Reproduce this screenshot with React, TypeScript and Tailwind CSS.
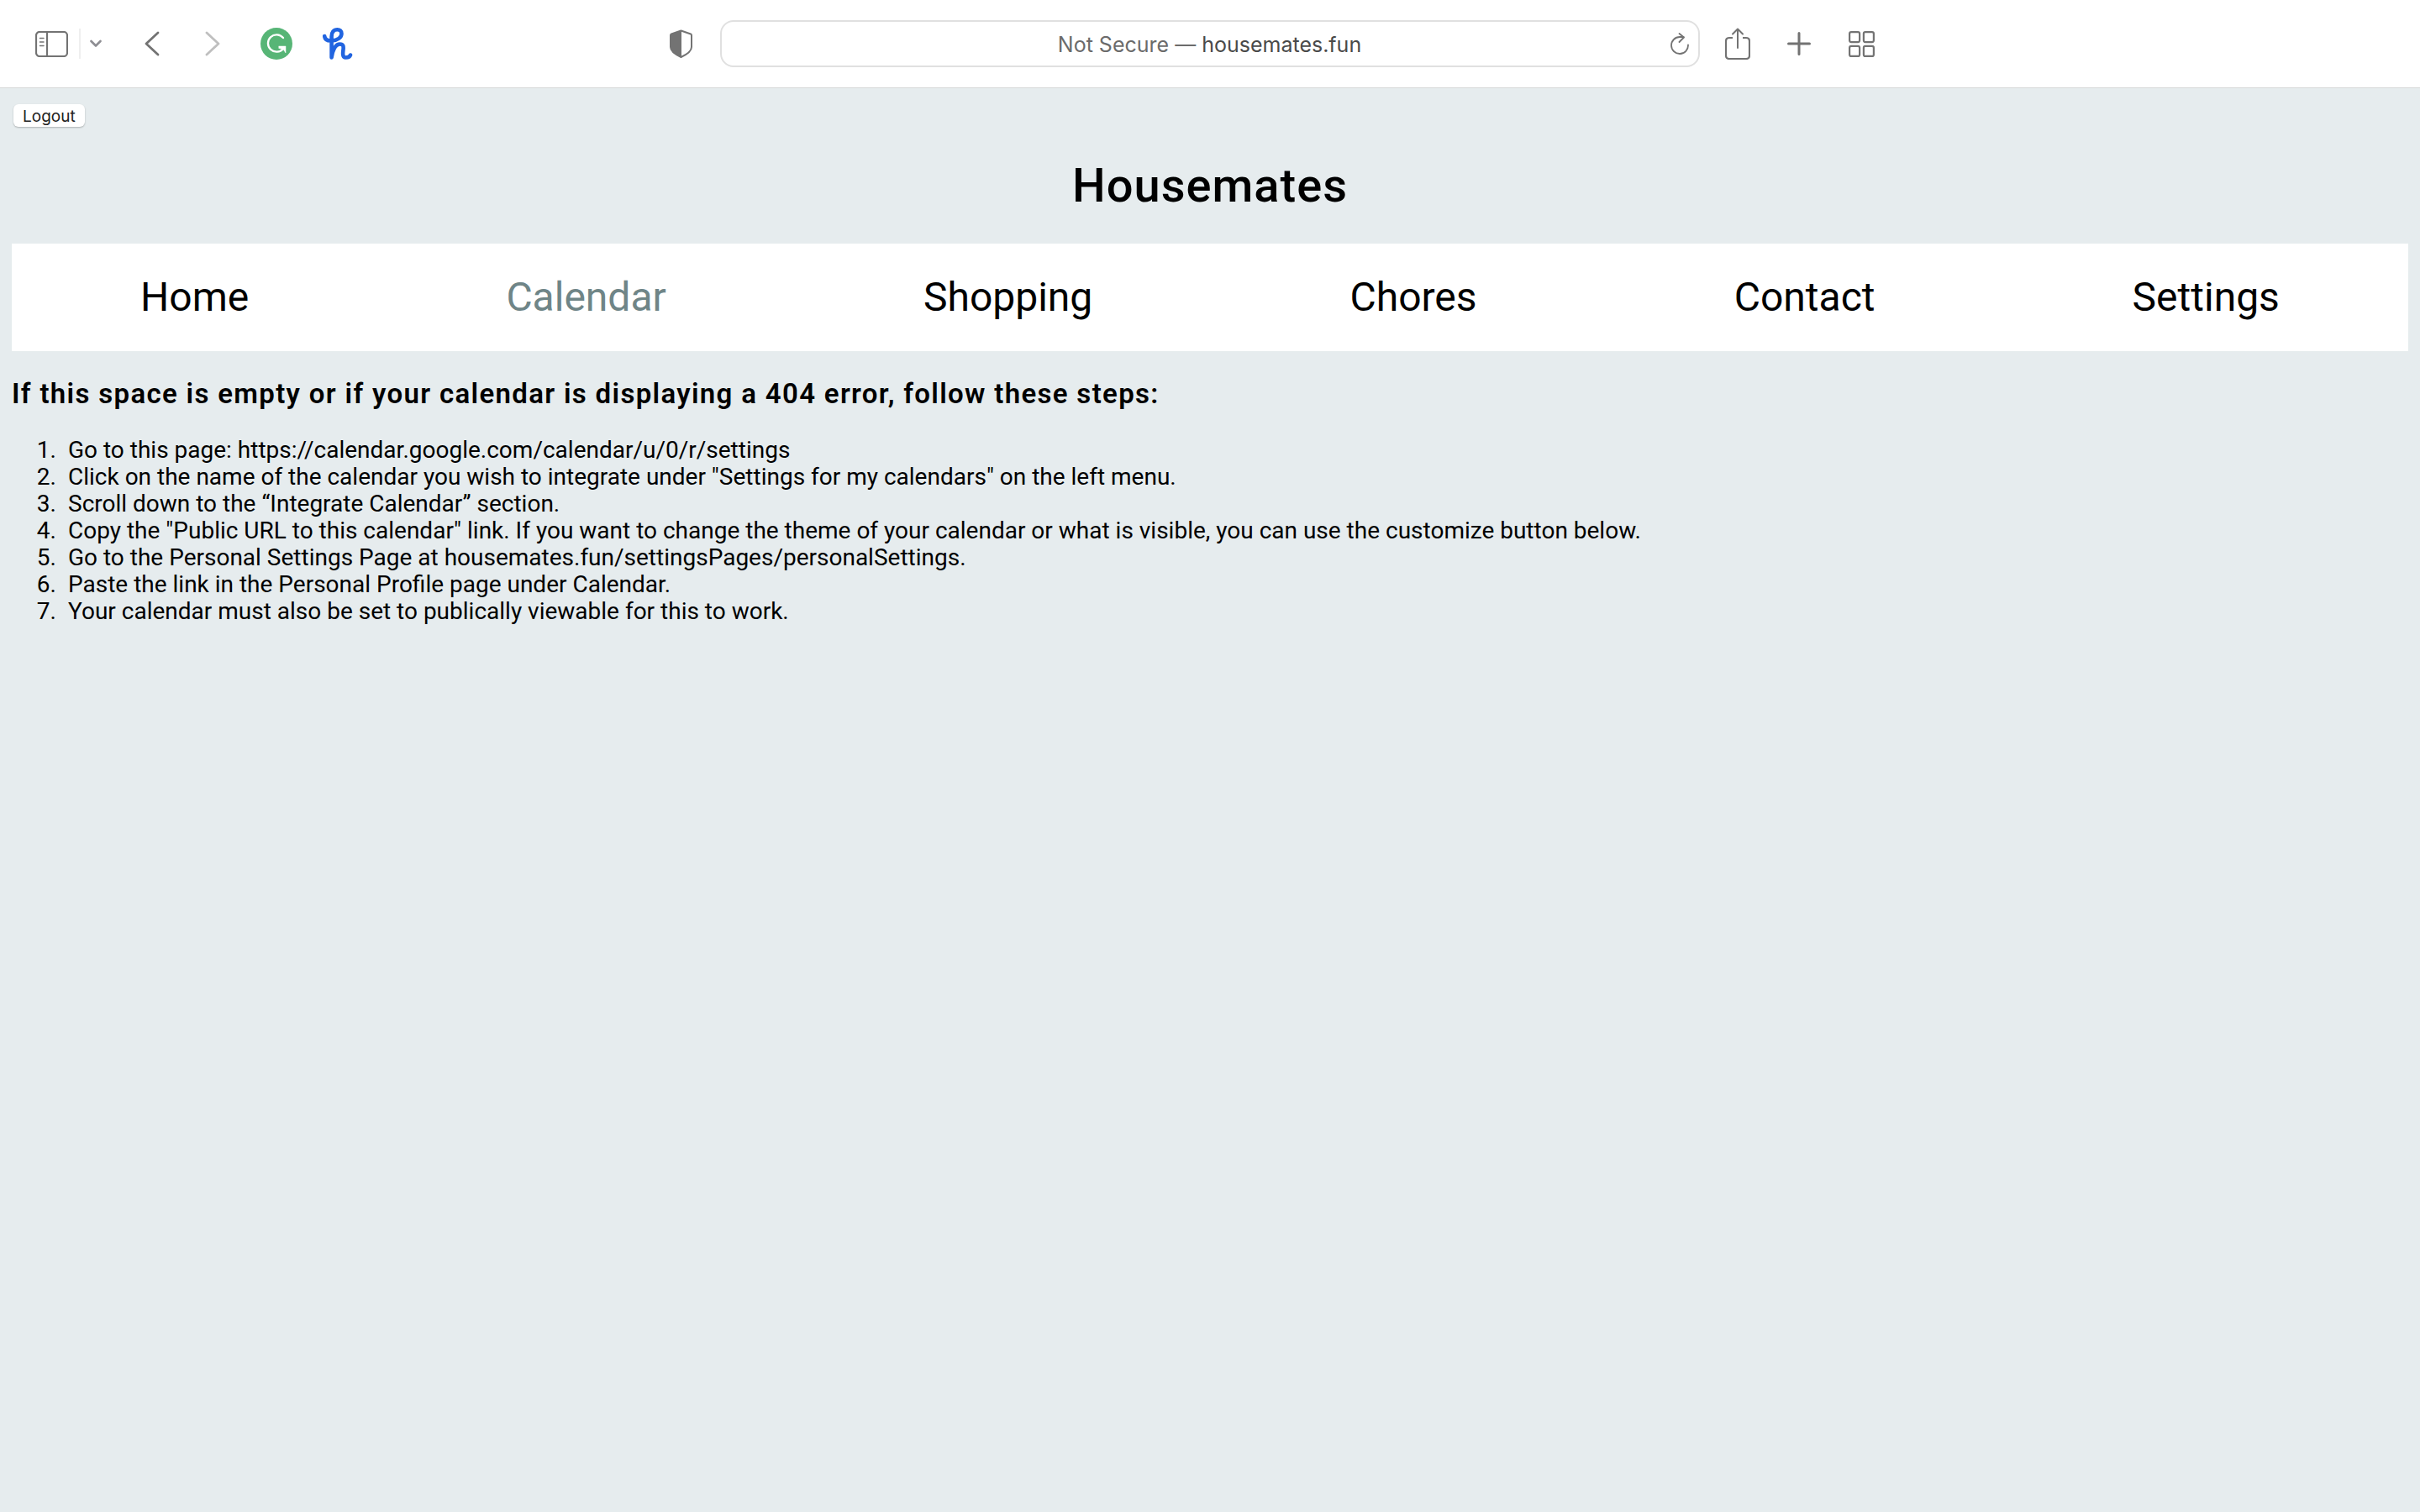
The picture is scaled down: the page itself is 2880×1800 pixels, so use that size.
import type { ReactNode } from "react";

type IconProps = { width: number; height: number; children: ReactNode };

function Icon({ width, height, children }: IconProps) {
  return (
    <svg
      width={width}
      height={height}
      viewBox={`0 0 ${width} ${height}`}
      fill="none"
      stroke="currentColor"
      strokeLinecap="round"
      strokeLinejoin="round"
      aria-hidden="true"
      className="block"
    >
      {children}
    </svg>
  );
}

function ToolButton({ label, muted, children }: { label: string; muted?: boolean; children: ReactNode }) {
  return (
    <button type="button" aria-label={label} className={muted ? "text-[#bfbfbf]" : "text-[#737373]"}>
      {children}
    </button>
  );
}

function Toolbar() {
  return (
    <header className="grid h-[105px] grid-cols-[857fr_1166fr_857fr] items-center border-b border-[#d6d8d8] bg-white">
      <div className="flex items-center justify-between pr-[33px] pl-[42px]">
        <div className="flex items-center">
          <ToolButton label="Show sidebar">
            <Icon width={39} height={31}>
              <rect x="1" y="1" width="37" height="29" rx="4" strokeWidth="2.200" />
              <path d="M14 1v29" strokeWidth="2.200" />
              <path d="M5.500 8.500h4.500M5.500 13h4.500M5.500 17.500h4.500" strokeWidth="1.500" />
            </Icon>
          </ToolButton>
          <span className="ml-[13px] h-9 w-0.5 bg-[#efefef]" />
          <div className="ml-[11px] flex">
            <ToolButton label="Tab groups">
              <Icon width={14} height={10}>
                <path d="M1.500 2l5.500 5.500L12.500 2" stroke="#8e8e93" strokeWidth="2.600" />
              </Icon>
            </ToolButton>
          </div>
          <div className="ml-[51px] flex">
            <ToolButton label="Back">
              <Icon width={18} height={30}>
                <path d="M16 2L2 15l14 13" strokeWidth="2.800" />
              </Icon>
            </ToolButton>
          </div>
          <div className="ml-[54px] flex">
            <ToolButton label="Forward" muted>
              <Icon width={18} height={30}>
                <path d="M2 2l14 13L2 28" strokeWidth="2.800" />
              </Icon>
            </ToolButton>
          </div>
          <div className="ml-[48px] flex">
            <ToolButton label="Grammarly">
              <Icon width={38} height={38}>
                <circle cx="19" cy="19" r="19" fill="#57b576" stroke="none" />
                <path d="M27 12A10.200 10.200 0 1 0 27 25" stroke="#fff" strokeWidth="2.300" />
                <path d="M22 22h8v8l-3-4.500-5-1z" fill="#fff" stroke="#fff" strokeWidth="0.500" />
              </Icon>
            </ToolButton>
          </div>
          <div className="ml-[36px] flex">
            <ToolButton label="Honey">
              <Icon width={36} height={38}>
                <path
                  d="M2.200 10C2.500 14 6 15.800 11 15.500C18 15 22.500 11.500 22.500 7C22.500 4 20.500 2.300 17.500 2.300C13 2.300 10.600 5.500 10.600 10.500V35.500C12 27 15 19.500 20.500 19.500C24.500 19.500 25 22 24.500 26C24 30 23.200 35.500 27.500 35.500C30.500 35.500 32.500 34 33 32.500"
                  stroke="#2164e0"
                  strokeWidth="4.600"
                />
              </Icon>
            </ToolButton>
          </div>
        </div>
        <ToolButton label="Privacy report">
          <Icon width={27} height={34}>
            <path
              d="M13.500 1.500L25 5.500Q26 6 26 7v14c0 5-5 8.500-12.500 12C6 29.500 1 26 1 21V7q0-1 1-1.500z"
              strokeWidth="2"
            />
            <path d="M14 1.500v31.500C6 29.500 1 26 1 21V7q0-1 1-1.500z" fill="currentColor" strokeWidth="0" />
          </Icon>
        </ToolButton>
      </div>

      <div className="flex h-14 items-center rounded-2xl border-2 border-[#e0e0e0] pr-[11px] pl-8 font-['Inter',sans-serif] text-[25px] leading-8">
        <p className="flex-1 pt-0.5 text-center text-[#6b6b6b]">
          Not Secure — <span className="text-[#4a4a4a]">housemates.fun</span>
        </p>
        <ToolButton label="Reload">
          <Icon width={22} height={26}>
            <path d="M21 14.500A10 10 0 1 1 11 5H15.500" strokeWidth="1.800" />
            <path d="M10.500 1l5.500 4.500L10.500 11" strokeWidth="1.800" />
          </Icon>
        </ToolButton>
      </div>

      <div className="flex items-center pl-[30px]">
        <ToolButton label="Share">
          <Icon width={30} height={38}>
            <path d="M9 12H5q-4 0-4 4v17q0 4 4 4h20q4 0 4-4V16q0-4-4-4h-4" strokeWidth="2.200" strokeLinecap="butt" />
            <path d="M15 24V2M9 7.500L15 1.500l6 6" strokeWidth="2" />
          </Icon>
        </ToolButton>
        <div className="ml-[44px] flex">
          <ToolButton label="New tab">
            <Icon width={28} height={28}>
              <path d="M14 1.500v25M1.500 14h25" strokeWidth="3" />
            </Icon>
          </ToolButton>
        </div>
        <div className="ml-[45px] flex">
          <ToolButton label="Tab overview">
            <Icon width={31} height={31}>
              <g strokeWidth="2.200">
                <rect x="1.100" y="1.100" width="12" height="12" rx="2" />
                <rect x="17.900" y="1.100" width="12" height="12" rx="2" />
                <rect x="1.100" y="17.900" width="12" height="12" rx="2" />
                <rect x="17.900" y="17.900" width="12" height="12" rx="2" />
              </g>
            </Icon>
          </ToolButton>
        </div>
      </div>
    </header>
  );
}

const pages = ["Home", "Calendar", "Shopping", "Chores", "Contact", "Settings"];

const steps = [
  "Go to this page: https://calendar.google.com/calendar/u/0/r/settings",
  'Click on the name of the calendar you wish to integrate under "Settings for my calendars" on the left menu.',
  "Scroll down to the “Integrate Calendar” section.",
  'Copy the "Public URL to this calendar" link. If you want to change the theme of your calendar or what is visible, you can use the customize button below.',
  "Go to the Personal Settings Page at housemates.fun/settingsPages/personalSettings.",
  "Paste the link in the Personal Profile page under Calendar.",
  "Your calendar must also be set to publically viewable for this to work.",
];

export default function App() {
  return (
    <div className="flex min-h-screen flex-col bg-[#e6ecee] font-['Roboto',sans-serif] text-black">
      <Toolbar />
      <main className="flex-1 px-3.5 pt-[19px]">
        <button
          type="button"
          className="ml-0.5 block h-[27px] rounded-md bg-white px-[11px] pt-0.5 font-['Inter',sans-serif] text-[19px] leading-[25px] text-[#222] shadow-[0_1px_2px_rgba(0,0,0,0.25)]"
        >
          Logout
        </button>

        <h1 className="mt-[38px] text-center text-[56px] leading-[64px] font-medium tracking-[1px]">Housemates</h1>

        <nav aria-label="Main" className="mt-[37px] flex h-32 items-center justify-around bg-white text-[48px] leading-[56px]">
          {pages.map((page) => (
            <a
              key={page}
              href={`#${page.toLowerCase()}`}
              aria-current={page === "Calendar" ? "page" : undefined}
              className={page === "Calendar" ? "text-[#6f8587]" : "text-black"}
            >
              {page}
            </a>
          ))}
        </nav>

        <h2 className="mt-8 text-[33px] leading-[38px] font-semibold tracking-[0.04em]">
          If this space is empty or if your calendar is displaying a 404 error, follow these steps:
        </h2>

        <ol className="mt-8 list-none text-[28px] leading-8">
          {steps.map((step, index) => (
            <li key={step} className="flex gap-3.5">
              <span className="w-[53px] shrink-0 text-right">{index + 1}.</span>
              <span>{step}</span>
            </li>
          ))}
        </ol>
      </main>
    </div>
  );
}
